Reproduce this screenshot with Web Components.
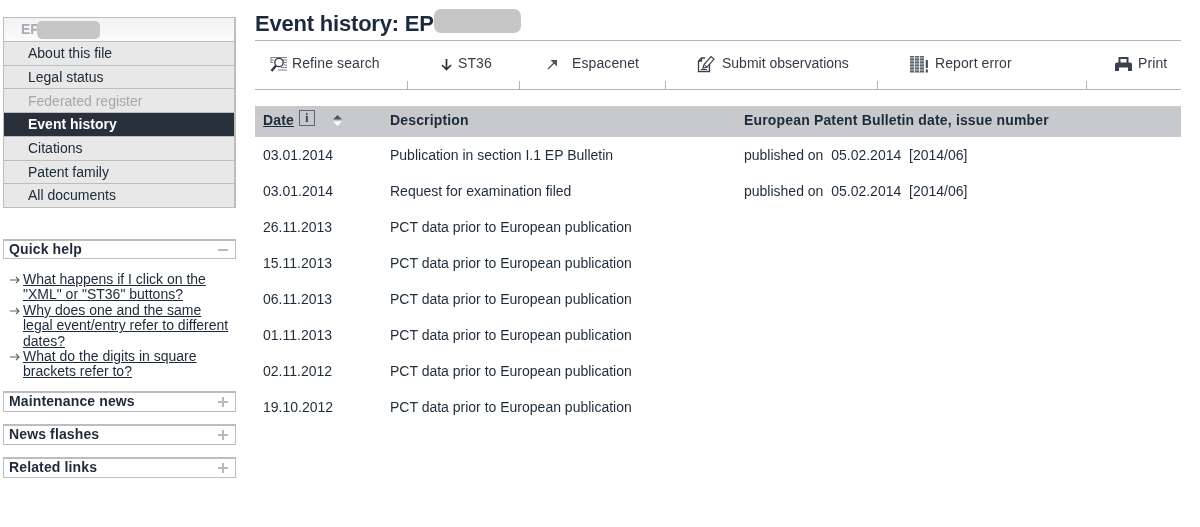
<!DOCTYPE html>
<html>
<head>
<meta charset="utf-8">
<title>Event history</title>
<style>
  body {
    margin: 0;
    background: #fff;
    color: #1c2a3a;
    font: 14px/1.1 "Liberation Sans", Arial, sans-serif;
  }
</style>
</head>
<body>
<register-page>
  <side-bar slot="side">
    <file-nav>
      <nav-item>About this file</nav-item>
      <nav-item>Legal status</nav-item>
      <nav-item disabled>Federated register</nav-item>
      <nav-item active>Event history</nav-item>
      <nav-item>Citations</nav-item>
      <nav-item>Patent family</nav-item>
      <nav-item>All documents</nav-item>
    </file-nav>
    <side-panel heading="Quick help" open style="margin-top:31px">
      <help-link>What happens if I click on the "XML" or "ST36" buttons?</help-link>
      <help-link>Why does one and the same legal event/entry refer to different dates?</help-link>
      <help-link>What do the digits in square brackets refer to?</help-link>
    </side-panel>
    <side-panel heading="Maintenance news" style="margin-top:11px"></side-panel>
    <side-panel heading="News flashes" style="margin-top:12px"></side-panel>
    <side-panel heading="Related links" style="margin-top:12px"></side-panel>
  </side-bar>

  <page-title>Event history: EP</page-title>
  <tool-bar>
    <tool-item w="153" icon="search" gap="4" pad="15">Refine search</tool-item>
    <tool-item w="112" icon="down" gap="5" pad="32">ST36</tool-item>
    <tool-item w="146" icon="out" gap="14" pad="27">Espacenet</tool-item>
    <tool-item w="212" icon="note" gap="7" pad="31" style="letter-spacing:0">Submit observations</tool-item>
    <tool-item w="209" icon="error" gap="6" pad="31">Report error</tool-item>
    <tool-item w="94" icon="print" gap="6" pad="28" last>Print</tool-item>
  </tool-bar>
  <history-table>
    <history-row date="03.01.2014" info="published on&nbsp; 05.02.2014&nbsp; [2014/06]">Publication in section I.1 EP Bulletin</history-row>
    <history-row date="03.01.2014" info="published on&nbsp; 05.02.2014&nbsp; [2014/06]">Request for examination filed</history-row>
    <history-row date="26.11.2013">PCT data prior to European publication</history-row>
    <history-row date="15.11.2013">PCT data prior to European publication</history-row>
    <history-row date="06.11.2013">PCT data prior to European publication</history-row>
    <history-row date="01.11.2013">PCT data prior to European publication</history-row>
    <history-row date="02.11.2012">PCT data prior to European publication</history-row>
    <history-row date="19.10.2012">PCT data prior to European publication</history-row>
  </history-table>
</register-page>

<script>
const ICONS = {
  search: `<svg width="18" height="17" viewBox="0 0 18 17" fill="none" stroke="#7d848a">
    <path d="M1 1.500h16M1 1v6M1 4h3M1 6.500h2M13 4h4M14 6.500h3M13.500 9h3.500M11 11.500h6M8 14h9" stroke-width="1"/>
    <circle cx="9" cy="6.500" r="4.200" fill="#fff" stroke="#2f3842" stroke-width="1.300"/>
    <path d="M6 9.500 1.500 15" stroke="#2f3842" stroke-width="2.400"/></svg>`,
  down: `<svg width="13" height="13" viewBox="0 0 13 13" fill="none" stroke="#2a3440" stroke-width="1.700">
    <path d="M6.500 1v10.500M2 7l4.500 4.500L11 7"/></svg>`,
  out: `<svg width="11" height="11" viewBox="0 0 11 11" fill="none" stroke="#4a535c" stroke-width="1.300">
    <path d="M1 10 9 2"/><path d="M3.500 1h6.500v6.500z" fill="#4a535c" stroke="none"/></svg>`,
  note: `<svg width="18" height="18" viewBox="0 0 18 18" fill="none" stroke="#39424c" stroke-width="1.300">
    <path d="M8 3H4.500L1.500 6v10.500h11V9"/>
    <path d="M4.500 3v3h-3"/>
    <path d="M6 13 7 9.500 14 1.500l3 2.600-7 8z" stroke-width="1.200"/>
    <path d="M7 9.500 10 12.100" stroke-width="1"/>
    <path d="M4 14.500h6" stroke-width="1"/></svg>`,
  error: `<svg width="20" height="17" viewBox="0 0 20 17">
    <path fill="#5a6168" d="M1 0h14v1.500H1zM1 3h14v1.500H1zM1 6h14v1.500H1zM1 9h14v1.500H1zM1 12h14v1.500H1zM1 15h14v1.500H1z"/>
    <path fill="#8d9297" d="M1 1.500h14V3H1zM1 4.500h14V6H1zM1 7.500h14V9H1zM1 10.500h14V12H1zM1 13.500h14V15H1z"/>
    <path fill="#e4e5e6" d="M5 0h1v16.500H5zM10 0h1v16.500h-1z"/>
    <path fill="#39424c" d="M16.800 4h2v8h-2zM16.800 13.500h2v3h-2z"/></svg>`,
  print: `<svg width="17" height="14" viewBox="0 0 17 14">
    <path fill="#39424c" d="M3.500 0h10v6h-2V2h-6v4h-2z"/>
    <path fill="#39424c" d="M2 5.500h13a2 2 0 0 1 2 2V14H0V7.500a2 2 0 0 1 2-2z"/>
    <path fill="#fff" d="M4 10.500h9V14H4z"/></svg>`
}

class RegisterPage extends HTMLElement {
  constructor() {
    super()
    this.attachShadow({ mode: 'open' })
    this.shadowRoot.innerHTML = `
      <style>
        :host {
          display: flex;
          height: 527px;
          box-sizing: border-box;
          padding: 17px 19px 0 3px;
          gap: 19px;
          filter: blur(.35px);
        }
        .side { flex: 0 0 233px; }
        .main { flex: 1; min-width: 0; margin-top: -17px; }
      </style>
      <div class="side"><slot name="side"></slot></div>
      <div class="main"><slot></slot></div>
    `
  }
}

class SideBar extends HTMLElement {
  constructor() {
    super()
    this.attachShadow({ mode: 'open' })
    this.shadowRoot.innerHTML = `
      <style>:host { display: block; }</style>
      <slot></slot>
    `
  }
}

class FileNav extends HTMLElement {
  constructor() {
    super()
    this.attachShadow({ mode: 'open' })
    this.shadowRoot.innerHTML = `
      <style>
        :host {
          display: block;
          border: 1px solid #bcbdbf;
          border-width: 1px 2px 1px 1px;
        }
        .file {
          display: flex;
          align-items: center;
          height: 23px;
          padding: 1px 0 0 17px;
          box-sizing: border-box;
          color: #a9abae;
          font-weight: bold;
          background: linear-gradient(#f1f2f3, #fbfbfc);
        }
        .mask {
          width: 63px;
          height: 18px;
          margin: -1px 0 0 -3px;
          border-radius: 5px;
          background: #c6c6c6;
        }
      </style>
      <div class="file">EP<span class="mask"></span></div>
      <slot></slot>
    `
  }
}

class NavItem extends HTMLElement {
  constructor() {
    super()
    this.attachShadow({ mode: 'open' })
    this.shadowRoot.innerHTML = `
      <style>
        :host {
          display: flex;
          align-items: center;
          box-sizing: border-box;
          height: 23.72px;
          padding: 1px 0 0 24px;
          color: #202c38;
          background: #e8e8e9;
          border-top: 1px solid #bcbdbf;
        }
        :host([disabled]) { color: #a4a6a9; }
        :host([active]) {
          color: #fff;
          font-weight: bold;
          background: #27303b;
        }
      </style>
      <slot></slot>
    `
  }
}

class SidePanel extends HTMLElement {
  constructor() {
    super()
    this.attachShadow({ mode: 'open' })
    const open = this.hasAttribute('open')
    this.shadowRoot.innerHTML = `
      <style>
        :host { display: block; }
        .head {
          display: flex;
          align-items: center;
          justify-content: space-between;
          box-sizing: border-box;
          height: ${open ? 20 : 21}px;
          padding: 0 7px 0 5px;
          font-weight: bold;
          letter-spacing: .13px;
          color: #1c2a3a;
          border: 1px solid #bcbdbf;
          border-width: 2px 1px 1px 1px;
        }
        svg { display: block; }
        .body { padding: 13px 4px 0 3px; }
      </style>
      <div class="head">
        <span>${this.getAttribute('heading')}</span>
        <svg width="10" height="10" viewBox="0 0 10 10" stroke="#b7b9bb" stroke-width="2">
          <path d="M0 5h10"/>${open ? '' : '<path d="M5 0v10"/>'}
        </svg>
      </div>
      ${open ? '<div class="body"><slot></slot></div>' : ''}
    `
  }
}

class HelpLink extends HTMLElement {
  constructor() {
    super()
    this.attachShadow({ mode: 'open' })
    this.shadowRoot.innerHTML = `
      <style>
        :host {
          display: flex;
          line-height: 15.4px;
          color: #1c2a3a;
        }
        svg { flex: none; margin: 4px 3px 0 4px; }
        a { color: inherit; text-decoration: underline; }
      </style>
      <svg width="10" height="8" viewBox="0 0 10 8" fill="none" stroke="#5a626a" stroke-width="1.100">
        <path d="M0 4h9M6 1l3 3-3 3"/>
      </svg>
      <a href="#"><slot></slot></a>
    `
  }
}

class PageTitle extends HTMLElement {
  constructor() {
    super()
    this.attachShadow({ mode: 'open' })
    this.shadowRoot.innerHTML = `
      <style>
        :host {
          display: flex;
          align-items: center;
          box-sizing: border-box;
          height: 40px;
          padding: 8px 0 0;
          font-size: 22px;
          font-weight: bold;
          letter-spacing: -.2px;
          color: #1b2a3c;
        }
        .mask {
          width: 87px;
          height: 24px;
          margin: -6px 0 0 0;
          border-radius: 7px;
          background: #c6c6c6;
        }
      </style>
      <slot></slot><span class="mask"></span>
    `
  }
}

class ToolBar extends HTMLElement {
  constructor() {
    super()
    this.attachShadow({ mode: 'open' })
    this.shadowRoot.innerHTML = `
      <style>
        :host {
          display: flex;
          box-sizing: border-box;
          height: 50px;
          border-top: 1px solid #b4b5b7;
          border-bottom: 1px solid #b4b5b7;
        }
      </style>
      <slot></slot>
    `
  }
}

class ToolItem extends HTMLElement {
  constructor() {
    super()
    this.attachShadow({ mode: 'open' })
    const icon = ICONS[this.getAttribute('icon')]
    this.shadowRoot.innerHTML = `
      <style>
        :host {
          display: flex;
          align-items: flex-start;
          box-sizing: border-box;
          flex: 0 0 ${this.getAttribute('w')}px;
          padding: 15px 0 0 ${this.getAttribute('pad')}px;
          gap: ${this.getAttribute('gap')}px;
          color: #333c47;
          letter-spacing: .1px;
          background: linear-gradient(#b4b5b7, #b4b5b7) right bottom / 1px 8px no-repeat;
        }
        :host([last]) { background: none; }
        .icon { display: flex; align-items: center; height: 16px; }
        svg { display: block; }
      </style>
      <span class="icon">${icon}</span>
      <slot></slot>
    `
  }
}

class HistoryTable extends HTMLElement {
  constructor() {
    super()
    this.attachShadow({ mode: 'open' })
    this.shadowRoot.innerHTML = `
      <style>
        :host { display: block; margin-top: 16px; }
        .head {
          display: grid;
          grid-template-columns: 135px 354px 1fr;
          align-items: center;
          box-sizing: border-box;
          height: 31px;
          padding-bottom: 2px;
          font-weight: bold;
          letter-spacing: .16px;
          background: #c8c9cc;
          color: #1c2a3a;
        }
        .date {
          display: flex;
          align-items: center;
          padding-left: 8px;
        }
        u { margin-right: 5px; }
        .info {
          box-sizing: border-box;
          width: 16px;
          height: 16px;
          margin: -4px 18px 0 0;
          border: 1px solid #5e6670;
          font: bold 13px/14px "Liberation Serif", serif;
          text-align: center;
          color: #3c4550;
        }
        .sort { display: block; }
      </style>
      <div class="head">
        <div class="date">
          <u>Date</u><span class="info">i</span>
          <svg class="sort" width="9" height="11" viewBox="0 0 9 11">
            <path d="M4.500 0 9 4.500H0z" fill="#4d5660"/>
            <path d="M4.500 11 9 6.500H0z" fill="#fff"/>
          </svg>
        </div>
        <div>Description</div>
        <div>European Patent Bulletin date, issue number</div>
      </div>
      <slot></slot>
    `
  }
}

class HistoryRow extends HTMLElement {
  constructor() {
    super()
    this.attachShadow({ mode: 'open' })
    this.shadowRoot.innerHTML = `
      <style>
        :host {
          display: grid;
          grid-template-columns: 135px 354px 1fr;
          align-items: center;
          box-sizing: border-box;
          height: 36px;
          padding-top: 1px;
          color: #1f2c3a;
        }
        .date { padding-left: 8px; }
      </style>
      <div class="date">${this.getAttribute('date')}</div>
      <div><slot></slot></div>
      <div>${this.getAttribute('info') || ''}</div>
    `
  }
}

customElements.define('register-page', RegisterPage)
customElements.define('side-bar', SideBar)
customElements.define('file-nav', FileNav)
customElements.define('nav-item', NavItem)
customElements.define('side-panel', SidePanel)
customElements.define('help-link', HelpLink)
customElements.define('page-title', PageTitle)
customElements.define('tool-bar', ToolBar)
customElements.define('tool-item', ToolItem)
customElements.define('history-table', HistoryTable)
customElements.define('history-row', HistoryRow)
</script>
</body>
</html>
